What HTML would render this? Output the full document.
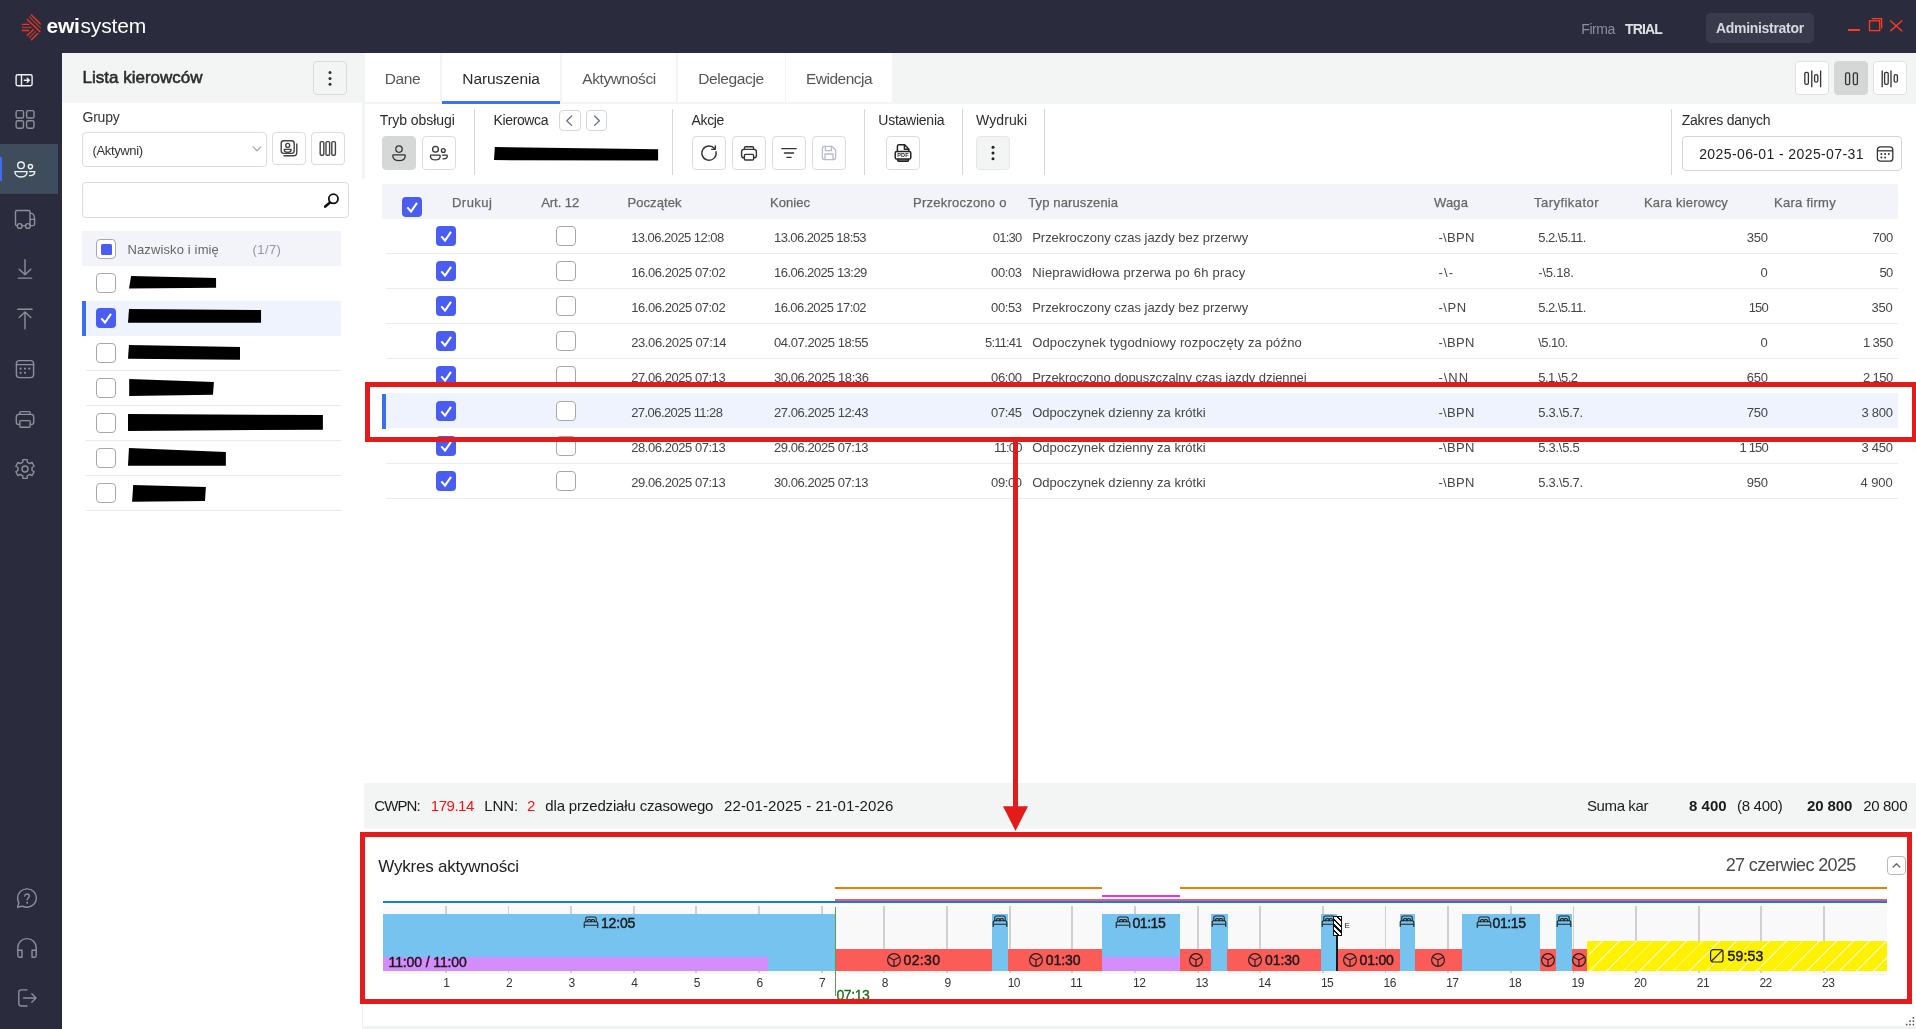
<!DOCTYPE html>
<html lang="pl"><head><meta charset="utf-8"><title>ewisystem - Naruszenia</title>
<style>
html,body{margin:0;padding:0;width:1916px;height:1029px;overflow:hidden;background:#fff;font-family:'Liberation Sans',sans-serif;}
.a{position:absolute;display:block}
.t{white-space:pre;}
</style></head><body>
<div id="app" style="position:absolute;left:0;top:0;width:1916px;height:1029px;will-change:transform">
<div class="a" style="left:0px;top:0px;width:1916px;height:1029px;background:#fff;"></div>
<div class="a" style="left:0px;top:0px;width:1916px;height:53px;background:#2a2c3e;"></div>
<div class="a" style="left:0px;top:53px;width:62px;height:976px;background:#2a2c3e;"></div>
<div class="a" style="left:62px;top:53px;width:303px;height:50px;background:#f3f5f5;"></div>
<div class="a" style="left:365px;top:53px;width:1551px;height:51px;background:#f3f5f5;"></div>
<div class="a" style="left:362px;top:103px;width:3px;height:76px;background:#f3f5f5;"></div>
<div class="a" style="left:0px;top:144px;width:58px;height:50px;background:#3f4c5b;"></div>
<div class="a" style="left:0px;top:157px;width:1.5px;height:24px;background:#3d6cf5;"></div>
<svg class="a" style="left:16px;top:8px;" width="40" height="38" viewBox="0 0 40 38"><g stroke-width="1.35" stroke-linecap="round" fill="none">
<g stroke="#f2361f"><path d="M15.5 7 L24.4 15.9"/><path d="M11.3 11.4 L24 23.8"/><path d="M11.3 27.5 L17.5 21.4"/><path d="M15.5 31.8 L21.8 25.5"/><path d="M6.3 16.4 H12.6"/><path d="M6.3 22.5 H12.6"/></g>
<g stroke="#a6352b"><path d="M13.5 9 L24.4 19.9"/><path d="M13.5 29.5 L19.6 23.6"/><path d="M6.3 19.5 H15.1"/></g></g></svg>
<span class="a t" style="left:46.60px;top:15.42px;font-size:21px;line-height:21px;color:#fff;font-weight:700;letter-spacing:-0.286px;">ewi</span>
<span class="a t" style="left:80.50px;top:15.42px;font-size:21px;line-height:21px;color:#fff;letter-spacing:-0.169px;">system</span>
<span class="a t" style="left:1581.30px;top:22.15px;font-size:14px;line-height:14px;color:#8e8f9a;letter-spacing:-0.456px;">Firma</span>
<span class="a t" style="left:1625.00px;top:22.15px;font-size:14px;line-height:14px;color:#e0e0e4;font-weight:700;letter-spacing:-0.844px;">TRIAL</span>
<div class="a" style="left:1706px;top:13px;width:108px;height:30px;background:#393b4d;border-radius:5px;"></div>
<span class="a t" style="left:1716.00px;top:20.65px;font-size:14px;line-height:14px;color:#d8d9de;font-weight:700;letter-spacing:-0.307px;">Administrator</span>
<div class="a" style="left:1848px;top:28.7px;width:12.2px;height:2.4px;background:#ff3b1e;"></div>
<svg class="a" style="left:1866px;top:16px;" width="20" height="18" viewBox="0 0 20 18"><g fill="none" stroke="#ff3b1e" stroke-width="1.3"><rect x="3.5" y="4.8" width="10.2" height="9.8"/><path d="M5.6 2.7 H15.6 V12.5"/></g></svg>
<svg class="a" style="left:1888px;top:18px;" width="16" height="16" viewBox="0 0 16 16"><g fill="none" stroke="#ff3b1e" stroke-width="1.4"><path d="M2.2 2.4 L14.2 13.2"/><path d="M14.2 2.4 L2.2 13.2"/></g></svg>
<svg class="a" style="left:0px;top:0px;" width="62" height="1029" viewBox="0 0 62 1029">
<g fill="none" stroke-width="1.4" stroke-linecap="round" stroke-linejoin="round">
 <g stroke="#f1f1f3">
  <rect x="16.1" y="74.7" width="16" height="11" rx="1.6"/><path d="M21.5 74.7 V85.7"/><path d="M24.3 80.2 H29.2 M27.2 78.2 L29.3 80.2 L27.2 82.2"/>
  <circle cx="21" cy="165.3" r="3.3"/><path d="M14.9 171.6 H27.1 C27.1 175 24.5 177 21 177 C17.5 177 14.9 175 14.9 171.6 Z"/>
  <circle cx="30.4" cy="166.6" r="2.1"/><path d="M29.6 171.6 H34.8 C34.8 174.2 32.8 175.9 29.6 175.6"/>
 </g>
 <g stroke="#8d8f9b">
  <rect x="16.1" y="110.6" width="7.4" height="7.4" rx="1.6"/><rect x="26.6" y="110.6" width="7.4" height="7.4" rx="1.6"/>
  <rect x="16.1" y="120.8" width="7.4" height="7.4" rx="1.6"/><rect x="26.6" y="120.8" width="7.4" height="7.4" rx="1.6"/>
  <path d="M17.3 225.6 H16.8 C16 225.6 15.5 225 15.5 224.2 V212 C15.5 211 16.2 210.5 17 210.5 H28.4 C29.4 210.5 30 211 30 212 V225.6 M22.2 225.6 H25.4 M30 213.4 H31.6 C33.4 213.4 34.6 216.4 34.6 219 V224.2 C34.6 225.2 34 225.6 33 225.6 H30.4 M30 219.4 H34.4"/>
  <circle cx="19.7" cy="226" r="2.4"/><circle cx="27.9" cy="226" r="2.4"/>
  <path d="M25 259.8 V274.6 M19.2 269.2 L25 274.8 L30.8 269.2 M18.3 278.1 H31.7"/>
  <path d="M17.7 309.2 H32.1 M25 328.8 V312 M19.2 317.6 L25 311.9 L30.8 317.6"/>
  <rect x="16.4" y="360.6" width="17.2" height="17" rx="3"/><path d="M16.4 364.6 H33.6"/>
  <rect x="16.3" y="414.4" width="17.4" height="10.2" rx="2.6"/><path d="M19.8 414.2 V412.8 C19.8 412 20.3 411.6 21 411.6 H29 C29.8 411.6 30.2 412 30.2 412.8 V414.2"/><rect x="19.8" y="420.6" width="10.4" height="6.6" rx="1.2" fill="#2a2c3e"/>
  <path d="M22.81 459.65 L27.19 459.65 L27.22 462.15 L29.82 463.65 L32.00 462.43 L34.19 466.23 L32.04 467.50 L32.04 470.50 L34.19 471.77 L32.00 475.57 L29.82 474.35 L27.22 475.85 L27.19 478.35 L22.81 478.35 L22.78 475.85 L20.18 474.35 L18.00 475.57 L15.81 471.77 L17.96 470.50 L17.96 467.50 L15.81 466.23 L18.00 462.43 L20.18 463.65 L22.78 462.15 Z"/><circle cx="25" cy="469" r="3"/>
  <path d="M27 888.9 C32.2 888.9 36.4 893 36.4 898.1 C36.4 903.2 32.2 907.3 27 907.3 C25.3 907.3 23.7 906.9 22.3 906.1 L17.6 907.3 L18.9 902.8 C18.1 901.4 17.6 899.8 17.6 898.1 C17.6 893 21.8 888.9 27 888.9 Z"/>
  <path d="M24.8 896.1 C24.8 893.3 29.3 893.4 29.3 896.1 C29.3 897.9 27.1 898 27.1 899.9"/>
  <path d="M17.8 950.5 V947.5 C17.8 942.5 21.9 938.6 27 938.6 C32.1 938.6 36.2 942.5 36.2 947.5 V950.5"/>
  <path d="M17.8 950.2 H22 V957.2 H19.4 C18.4 957.2 17.8 956.6 17.8 955.6 Z M36.2 950.2 H32 V957.2 H34.6 C35.6 957.2 36.2 956.6 36.2 955.6 Z"/>
  <path d="M27 989.9 H21.2 C19.6 989.9 18.8 990.8 18.8 992.2 V1003.6 C18.8 1005.2 19.6 1006 21.2 1006 H27 M23.6 998 H35.6 M31.8 993.8 L36 998 L31.8 1002.2"/>
 </g>
 <g fill="#8d8f9b" stroke="none">
  <circle cx="20.6" cy="368.7" r="1.1"/><circle cx="25" cy="368.7" r="1.1"/><circle cx="29.3" cy="368.7" r="1.1"/>
  <circle cx="20.6" cy="372.8" r="1.1"/><circle cx="25" cy="372.8" r="1.1"/>
  <circle cx="27.1" cy="902.8" r="1"/>
 </g>
</g></svg>
<span class="a t" style="left:82.60px;top:68.81px;font-size:17px;line-height:17px;color:#2b2b2b;-webkit-text-stroke:0.55px #2b2b2b;">Lista kierowców</span>
<div class="a" style="left:313px;top:61px;width:34px;height:34px;background:#f3f5f5;border:1px solid #d9dbdb;box-sizing:border-box;border-radius:4px;"></div>
<svg class="a" style="left:313px;top:61px;" width="34" height="34" viewBox="0 0 34 34"><g fill="#333"><circle cx="17" cy="11.6" r="1.5"/><circle cx="17" cy="17.4" r="1.5"/><circle cx="17" cy="23.2" r="1.5"/></g></svg>
<span class="a t" style="left:82.50px;top:110.05px;font-size:14px;line-height:14px;color:#333;letter-spacing:-0.225px;">Grupy</span>
<div class="a" style="left:82px;top:131.5px;width:185px;height:35px;background:#fff;border:1px solid #dcdcdc;box-sizing:border-box;border-radius:4px;"></div>
<span class="a t" style="left:92.60px;top:144.00px;font-size:13px;line-height:13px;color:#333;letter-spacing:-0.384px;">(Aktywni)</span>
<svg class="a" style="left:251px;top:144px;" width="12" height="10" viewBox="0 0 12 10"><path d="M2.3 2.8 L6 6.8 L9.7 2.8" fill="none" stroke="#9ea2b6" stroke-width="1.2" stroke-linecap="round" stroke-linejoin="round"/></svg>
<div class="a" style="left:272.4px;top:132.3px;width:33.4px;height:33.2px;background:#fff;border:1px solid #dcdcdc;box-sizing:border-box;border-radius:4px;"></div>
<svg class="a" style="left:272.4px;top:132.3px;" width="34" height="34" viewBox="0 0 34 34"><g fill="none" stroke="#444" stroke-width="1.4" stroke-linecap="round" stroke-linejoin="round">
<rect x="9.2" y="8.8" width="13" height="12.6" rx="2.6"/><path d="M12 23.8 H21.6 C23.6 23.8 24.8 22.6 24.8 20.6 V12"/>
<circle cx="15.7" cy="13.4" r="2"/><path d="M12.2 17.4 H19.2 C19.2 19.4 18 20.2 15.7 20.2 C13.4 20.2 12.2 19.4 12.2 17.4 Z"/></g></svg>
<div class="a" style="left:311.2px;top:132.3px;width:33.6px;height:33.2px;background:#fff;border:1px solid #dcdcdc;box-sizing:border-box;border-radius:4px;"></div>
<svg class="a" style="left:311.2px;top:132.3px;" width="34" height="34" viewBox="0 0 34 34"><g fill="none" stroke="#444" stroke-width="1.4"><rect x="9.2" y="9.6" width="3.6" height="13.6" rx="1.2"/><rect x="15" y="9.6" width="3.6" height="13.6" rx="1.2"/><rect x="20.8" y="9.6" width="3.6" height="13.6" rx="1.2"/></g></svg>
<div class="a" style="left:82px;top:182.4px;width:267px;height:35.2px;background:#fff;border:1px solid #dcdcdc;box-sizing:border-box;border-radius:4px;"></div>
<svg class="a" style="left:322px;top:191px;" width="20" height="20" viewBox="0 0 20 20"><g fill="none" stroke="#111" stroke-linecap="round"><circle cx="11.4" cy="7.8" r="4.6" stroke-width="1.8"/><path d="M8 11.6 L3.2 15.6" stroke-width="2.6"/></g></svg>
<div class="a" style="left:82px;top:231px;width:259px;height:35px;background:#f3f4f9;"></div>
<div class="a" style="left:96px;top:239px;width:20px;height:19.8px;background:#fff;border:1px solid #a8a8a8;box-sizing:border-box;border-radius:4px;"></div>
<div class="a" style="left:100.6px;top:244px;width:11.4px;height:11px;background:#4a5df2;border-radius:1.5px;"></div>
<span class="a t" style="left:127.40px;top:242.60px;font-size:13px;line-height:13px;color:#666;letter-spacing:0.135px;">Nazwisko i imię</span>
<span class="a t" style="left:252.50px;top:242.60px;font-size:13px;line-height:13px;color:#9296a6;letter-spacing:0.413px;">(1/7)</span>
<div class="a" style="left:82px;top:300.5px;width:259px;height:35px;background:#eef3fd;"></div>
<div class="a" style="left:82px;top:300.5px;width:4px;height:35px;background:#3a6ff0;"></div>
<div class="a" style="left:86px;top:370.0px;width:255px;height:1px;background:#e9e9e9;"></div>
<div class="a" style="left:86px;top:404.9px;width:255px;height:1px;background:#e9e9e9;"></div>
<div class="a" style="left:86px;top:439.9px;width:255px;height:1px;background:#e9e9e9;"></div>
<div class="a" style="left:86px;top:475.0px;width:255px;height:1px;background:#e9e9e9;"></div>
<div class="a" style="left:86px;top:509.9px;width:255px;height:1px;background:#e9e9e9;"></div>
<div class="a" style="left:96px;top:273.3px;width:20px;height:20px;background:#fff;border:1px solid #a8a8a8;box-sizing:border-box;border-radius:4px;"></div>
<svg class="a" style="left:96px;top:308.3px;" width="20" height="20" viewBox="0 0 20 20"><rect x="0" y="0" width="20" height="20" rx="4" fill="#4a5df2"/><path d="M5.3 10.4 L9 14.5 L15 5.8" fill="none" stroke="#fff" stroke-width="2.1" stroke-linecap="butt" stroke-linejoin="miter"/></svg>
<div class="a" style="left:96px;top:343.3px;width:20px;height:20px;background:#fff;border:1px solid #a8a8a8;box-sizing:border-box;border-radius:4px;"></div>
<div class="a" style="left:96px;top:378.3px;width:20px;height:20px;background:#fff;border:1px solid #a8a8a8;box-sizing:border-box;border-radius:4px;"></div>
<div class="a" style="left:96px;top:413.3px;width:20px;height:20px;background:#fff;border:1px solid #a8a8a8;box-sizing:border-box;border-radius:4px;"></div>
<div class="a" style="left:96px;top:448.3px;width:20px;height:20px;background:#fff;border:1px solid #a8a8a8;box-sizing:border-box;border-radius:4px;"></div>
<div class="a" style="left:96px;top:483.3px;width:20px;height:20px;background:#fff;border:1px solid #a8a8a8;box-sizing:border-box;border-radius:4px;"></div>
<svg class="a" style="left:0px;top:0px;" width="700" height="520" viewBox="0 0 700 520"><polygon fill="#000" points="131.1,276 216.05,277.9 216.05,287.7 129,288.6"/><polygon fill="#000" points="129,308.9 261.05,310.1 261.05,322.7 128,322.7"/><polygon fill="#000" points="128.96,345.1 240,346.9 240,359.7 128,358.8"/><polygon fill="#000" points="129.2,379 213.9,382.1 213,394.7 129.2,395.9"/><polygon fill="#000" points="128,414 322.9,415 322.9,429.7 128,430.9"/><polygon fill="#000" points="128.96,448 225.9,451.9 225.9,465.8 128,465.8"/><polygon fill="#000" points="133.2,485.1 205.9,487.1 205,500.9 132.1,501.8"/><polygon fill="#000" points="494.8,147 658.1,149.3 658.1,160.6 494,160.1"/></svg>
<div class="a" style="left:365px;top:53px;width:75.39999999999998px;height:48.5px;background:#fff;"></div>
<div class="a" style="left:441.8px;top:53px;width:118.09999999999997px;height:50px;background:#fff;"></div>
<div class="a" style="left:561.7px;top:53px;width:114.69999999999993px;height:48.5px;background:#fff;"></div>
<div class="a" style="left:677.9px;top:53px;width:106.70000000000005px;height:48.5px;background:#fff;"></div>
<div class="a" style="left:786px;top:53px;width:106px;height:48.5px;background:#fff;"></div>
<div class="a" style="left:441.8px;top:101px;width:118.1px;height:3px;background:#3d73f2;"></div>
<span class="a t" style="left:384.80px;top:70.88px;font-size:15.5px;line-height:15.5px;color:#555;letter-spacing:-0.391px;">Dane</span>
<span class="a t" style="left:462.30px;top:70.88px;font-size:15.5px;line-height:15.5px;color:#2b2b2b;letter-spacing:-0.091px;">Naruszenia</span>
<span class="a t" style="left:582.30px;top:70.88px;font-size:15.5px;line-height:15.5px;color:#555;letter-spacing:-0.403px;">Aktywności</span>
<span class="a t" style="left:698.20px;top:70.88px;font-size:15.5px;line-height:15.5px;color:#555;letter-spacing:-0.382px;">Delegacje</span>
<span class="a t" style="left:806.00px;top:70.88px;font-size:15.5px;line-height:15.5px;color:#555;letter-spacing:-0.517px;">Ewidencja</span>
<div class="a" style="left:1795.4px;top:61.3px;width:33.2px;height:33.4px;background:#fff;border:1px solid #dfe1e1;box-sizing:border-box;border-radius:4px;"></div>
<div class="a" style="left:1834.4px;top:61.3px;width:33.4px;height:33.4px;background:#d5d7d7;border:1px solid #d5d7d7;box-sizing:border-box;border-radius:4px;"></div>
<div class="a" style="left:1873.4px;top:61.3px;width:33.4px;height:33.4px;background:#fff;border:1px solid #dfe1e1;box-sizing:border-box;border-radius:4px;"></div>
<svg class="a" style="left:1796.2px;top:61.6px;" width="34" height="34" viewBox="0 0 34 34"><g fill="none" stroke="#333" stroke-width="1.3"><rect x="8.8" y="10.4" width="3.6" height="12" rx="1.4"/><path d="M15.8 8.4 V25.2 M24.6 8.4 V25.2"/><rect x="18.6" y="12.6" width="3.2" height="7.6" rx="1.5"/></g></svg>
<svg class="a" style="left:1834.9px;top:61.6px;" width="34" height="34" viewBox="0 0 34 34"><g fill="none" stroke="#333" stroke-width="1.3"><rect x="10.6" y="10.8" width="4" height="11.8" rx="1.4"/><rect x="18.4" y="10.8" width="4" height="11.8" rx="1.4"/></g></svg>
<svg class="a" style="left:1873.9px;top:61.6px;" width="34" height="34" viewBox="0 0 34 34"><g fill="none" stroke="#333" stroke-width="1.3"><path d="M8.2 8.4 V25.2 M17 8.4 V25.2"/><rect x="10.6" y="10.4" width="3.6" height="12" rx="1.4"/><rect x="20.2" y="12.6" width="3.2" height="7.6" rx="1.5"/></g></svg>
<span class="a t" style="left:379.70px;top:113.15px;font-size:14px;line-height:14px;color:#2b2b2b;letter-spacing:-0.062px;">Tryb obsługi</span>
<div class="a" style="left:382px;top:136px;width:34px;height:33.6px;background:#d6d8d8;border:1px solid #d6d8d8;box-sizing:border-box;border-radius:4px;"></div>
<div class="a" style="left:422.2px;top:136px;width:33.8px;height:33.6px;background:#fff;border:1px solid #dcdcdc;box-sizing:border-box;border-radius:4px;"></div>
<svg class="a" style="left:382px;top:136px;" width="34" height="34" viewBox="0 0 34 34"><g fill="none" stroke="#333" stroke-width="1.3" stroke-linejoin="round"><circle cx="17" cy="13.1" r="3.2"/><path d="M10.8 19.7 Q10.8 18.9 11.6 18.9 H22.4 Q23.2 18.9 23.2 19.7 C23.2 23 20.6 24.7 17 24.7 C13.4 24.7 10.8 23 10.8 19.7 Z"/></g></svg>
<svg class="a" style="left:422.2px;top:136px;" width="34" height="34" viewBox="0 0 34 34"><g fill="none" stroke="#333" stroke-width="1.3" stroke-linejoin="round" stroke-linecap="round"><circle cx="13.5" cy="13.2" r="2.9"/><path d="M8.4 19.9 Q8.4 19.2 9.1 19.2 H17.5 Q18.2 19.2 18.2 19.9 C18.2 22.6 16.3 23.9 13.3 23.9 C10.3 23.9 8.4 22.6 8.4 19.9 Z"/><circle cx="21.3" cy="14.5" r="1.9"/><path d="M20.6 19.2 H24.6 Q25.3 19.2 25.3 19.9 C25.3 22 23.6 23.1 21 22.8"/></g></svg>
<div class="a" style="left:473.9px;top:108.5px;width:1.2px;height:66px;background:#d6d6d6;"></div>
<div class="a" style="left:671.9px;top:108.5px;width:1.2px;height:66px;background:#d6d6d6;"></div>
<div class="a" style="left:864.0px;top:108.5px;width:1.2px;height:66px;background:#d6d6d6;"></div>
<div class="a" style="left:961.9px;top:108.5px;width:1.2px;height:66px;background:#d6d6d6;"></div>
<div class="a" style="left:1044.1px;top:108.5px;width:1.2px;height:66px;background:#d6d6d6;"></div>
<div class="a" style="left:1670.8px;top:108.5px;width:1.2px;height:66px;background:#d6d6d6;"></div>
<span class="a t" style="left:493.50px;top:113.15px;font-size:14px;line-height:14px;color:#2b2b2b;letter-spacing:-0.362px;">Kierowca</span>
<div class="a" style="left:559.2px;top:110.2px;width:21.4px;height:21.2px;background:#fff;border:1px solid #d4d6de;box-sizing:border-box;border-radius:4px;"></div>
<div class="a" style="left:586.1px;top:110.2px;width:21.4px;height:21.2px;background:#fff;border:1px solid #d4d6de;box-sizing:border-box;border-radius:4px;"></div>
<svg class="a" style="left:559.2px;top:110.2px;" width="22" height="22" viewBox="0 0 22 22"><path d="M12.6 6 L7.8 10.7 L12.6 15.4" fill="none" stroke="#6a6f8a" stroke-width="1.3" stroke-linecap="round" stroke-linejoin="round"/></svg>
<svg class="a" style="left:586.1px;top:110.2px;" width="22" height="22" viewBox="0 0 22 22"><path d="M8.6 6 L13.4 10.7 L8.6 15.4" fill="none" stroke="#6a6f8a" stroke-width="1.3" stroke-linecap="round" stroke-linejoin="round"/></svg>
<span class="a t" style="left:691.50px;top:113.15px;font-size:14px;line-height:14px;color:#2b2b2b;letter-spacing:-0.347px;">Akcje</span>
<div class="a" style="left:692px;top:136px;width:34px;height:34px;background:#fff;border:1px solid #dcdcdc;box-sizing:border-box;border-radius:4px;"></div>
<div class="a" style="left:732px;top:136px;width:34px;height:34px;background:#fff;border:1px solid #dcdcdc;box-sizing:border-box;border-radius:4px;"></div>
<div class="a" style="left:772px;top:136px;width:34px;height:34px;background:#fff;border:1px solid #dcdcdc;box-sizing:border-box;border-radius:4px;"></div>
<div class="a" style="left:812px;top:136px;width:34px;height:34px;background:#fff;border:1px solid #dcdcdc;box-sizing:border-box;border-radius:4px;"></div>
<svg class="a" style="left:692px;top:136px;" width="34" height="34" viewBox="0 0 34 34"><g fill="none" stroke="#333" stroke-width="1.4" stroke-linecap="round" stroke-linejoin="round"><path d="M24.05 15.8 A7.15 7.15 0 1 1 22.5 12.5"/><path d="M23.35 9.9 V13.35 H19.7"/></g></svg>
<svg class="a" style="left:732px;top:136px;" width="34" height="34" viewBox="0 0 34 34"><g fill="none" stroke="#333" stroke-width="1.4" stroke-linejoin="round"><rect x="9.6" y="13.4" width="14.8" height="8.4" rx="2.4"/><path d="M12.4 13.2 V12 C12.4 11.2 12.9 10.8 13.6 10.8 H20.4 C21.2 10.8 21.6 11.2 21.6 12 V13.2"/><rect x="12.4" y="18.4" width="9.2" height="5.6" rx="1" fill="#fff"/></g></svg>
<svg class="a" style="left:772px;top:136px;" width="34" height="34" viewBox="0 0 34 34"><g fill="none" stroke="#333" stroke-width="1.4" stroke-linecap="round"><path d="M9.8 12.6 H24.2 M12.4 17 H21.6 M15 21.4 H19"/></g></svg>
<svg class="a" style="left:812px;top:136px;" width="34" height="34" viewBox="0 0 34 34"><g fill="none" stroke="#b9bcc6" stroke-width="1.3" stroke-linejoin="round"><path d="M10.4 12.4 C10.4 11.2 11.2 10.4 12.4 10.4 H20 L23.6 14 V21.6 C23.6 22.8 22.8 23.6 21.6 23.6 H12.4 C11.2 23.6 10.4 22.8 10.4 21.6 Z"/><path d="M13.4 10.6 V14.6 H19.4 V10.6 M13 23.4 V18 H21 V23.4"/></g></svg>
<span class="a t" style="left:878.30px;top:113.15px;font-size:14px;line-height:14px;color:#2b2b2b;letter-spacing:-0.248px;">Ustawienia</span>
<div class="a" style="left:886.2px;top:136px;width:34px;height:34px;background:#fff;border:1px solid #dcdcdc;box-sizing:border-box;border-radius:4px;"></div>
<svg class="a" style="left:886.2px;top:136px;" width="34" height="34" viewBox="0 0 34 34"><g fill="none" stroke="#222" stroke-width="1.5" stroke-linejoin="round"><path d="M11.4 15.6 V10.4 C11.4 9.4 12 8.8 13 8.8 H18.6 L22.8 13 V15.6"/><path d="M18.4 9 V13.2 H22.6"/><path d="M11.6 23 V24 C11.6 24.8 12.1 25.2 12.8 25.2 H21.4 C22.2 25.2 22.6 24.8 22.6 24 V23" fill="#8a8a8a"/>
<rect x="9.2" y="15.6" width="15.6" height="7.4" rx="1.6" fill="#fff"/></g>
<text x="17" y="21.25" font-family="'Liberation Sans',sans-serif" font-size="5.5" font-weight="700" fill="#222" text-anchor="middle" letter-spacing="0.2">PDF</text></svg>
<span class="a t" style="left:976.10px;top:113.15px;font-size:14px;line-height:14px;color:#2b2b2b;letter-spacing:0.080px;">Wydruki</span>
<div class="a" style="left:976px;top:136px;width:34px;height:34px;background:#f3f4f4;border:1px solid #e6e6e6;box-sizing:border-box;border-radius:4px;"></div>
<svg class="a" style="left:976px;top:136px;" width="34" height="34" viewBox="0 0 34 34"><g fill="#222"><circle cx="17" cy="11.2" r="1.5"/><circle cx="17" cy="17" r="1.5"/><circle cx="17" cy="22.8" r="1.5"/></g></svg>
<span class="a t" style="left:1681.80px;top:113.15px;font-size:14px;line-height:14px;color:#2b2b2b;letter-spacing:-0.256px;">Zakres danych</span>
<div class="a" style="left:1682.3px;top:136.3px;width:219.4px;height:34.3px;background:#fff;border:1px solid #d4d4d4;box-sizing:border-box;border-radius:4px;"></div>
<span class="a t" style="left:1699.20px;top:147.15px;font-size:14px;line-height:14px;color:#222;letter-spacing:0.393px;">2025-06-01 - 2025-07-31</span>
<svg class="a" style="left:1875px;top:144px;" width="20" height="20" viewBox="0 0 20 20"><g fill="none" stroke="#333" stroke-width="1.3"><rect x="2.4" y="2.8" width="15.4" height="14.4" rx="3"/><path d="M2.4 6.8 H17.8"/></g>
<g fill="#333"><circle cx="6.4" cy="10" r="1"/><circle cx="10.1" cy="10" r="1"/><circle cx="13.8" cy="10" r="1"/><circle cx="6.4" cy="13.6" r="1"/><circle cx="10.1" cy="13.6" r="1"/></g></svg>
<div class="a" style="left:382px;top:184.2px;width:1515.8px;height:34.5px;background:#f3f4f9;"></div>
<svg class="a" style="left:402px;top:197px;" width="20" height="20" viewBox="0 0 20 20"><rect x="0" y="0" width="20" height="20" rx="4" fill="#4a5df2"/><path d="M5.3 10.4 L9 14.5 L15 5.8" fill="none" stroke="#fff" stroke-width="2.1" stroke-linecap="butt" stroke-linejoin="miter"/></svg>
<span class="a t" style="left:452.00px;top:195.50px;font-size:13px;line-height:13px;color:#666;letter-spacing:0.454px;-webkit-text-stroke:0.25px #666;">Drukuj</span>
<span class="a t" style="left:541.20px;top:195.50px;font-size:13px;line-height:13px;color:#666;letter-spacing:-0.042px;-webkit-text-stroke:0.25px #666;">Art. 12</span>
<span class="a t" style="left:627.50px;top:195.50px;font-size:13px;line-height:13px;color:#666;letter-spacing:0.064px;-webkit-text-stroke:0.25px #666;">Początek</span>
<span class="a t" style="left:770.00px;top:195.50px;font-size:13px;line-height:13px;color:#666;letter-spacing:0.042px;-webkit-text-stroke:0.25px #666;">Koniec</span>
<span class="a t" style="left:913.00px;top:195.50px;font-size:13px;line-height:13px;color:#666;letter-spacing:0.234px;-webkit-text-stroke:0.25px #666;">Przekroczono o</span>
<span class="a t" style="left:1028.20px;top:195.50px;font-size:13px;line-height:13px;color:#666;letter-spacing:0.131px;-webkit-text-stroke:0.25px #666;">Typ naruszenia</span>
<span class="a t" style="left:1434.10px;top:195.50px;font-size:13px;line-height:13px;color:#666;letter-spacing:0.129px;-webkit-text-stroke:0.25px #666;">Waga</span>
<span class="a t" style="left:1534.00px;top:195.50px;font-size:13px;line-height:13px;color:#666;letter-spacing:0.457px;-webkit-text-stroke:0.25px #666;">Taryfikator</span>
<span class="a t" style="left:1644.00px;top:195.50px;font-size:13px;line-height:13px;color:#666;letter-spacing:0.181px;-webkit-text-stroke:0.25px #666;">Kara kierowcy</span>
<span class="a t" style="left:1774.00px;top:195.50px;font-size:13px;line-height:13px;color:#666;letter-spacing:0.277px;-webkit-text-stroke:0.25px #666;">Kara firmy</span>
<div class="a" style="left:386px;top:253.0px;width:1511.8px;height:1px;background:#ececec;"></div>
<svg class="a" style="left:436px;top:226.0px;" width="20" height="20" viewBox="0 0 20 20"><rect x="0" y="0" width="20" height="20" rx="4" fill="#4a5df2"/><path d="M5.3 10.4 L9 14.5 L15 5.8" fill="none" stroke="#fff" stroke-width="2.1" stroke-linecap="butt" stroke-linejoin="miter"/></svg>
<div class="a" style="left:555.8px;top:226.0px;width:20px;height:20px;background:#fff;border:1px solid #a8a8a8;box-sizing:border-box;border-radius:4px;"></div>
<span class="a t" style="left:631.20px;top:230.60px;font-size:13px;line-height:13px;color:#454545;letter-spacing:-0.551px;">13.06.2025 12:08</span>
<span class="a t" style="left:774.00px;top:230.60px;font-size:13px;line-height:13px;color:#454545;letter-spacing:-0.576px;">13.06.2025 18:53</span>
<span class="a t" style="left:992.80px;top:230.60px;font-size:13px;line-height:13px;color:#454545;letter-spacing:-0.749px;">01:30</span>
<span class="a t" style="left:1032.20px;top:230.60px;font-size:13px;line-height:13px;color:#454545;letter-spacing:-0.021px;">Przekroczony czas jazdy bez przerwy</span>
<span class="a t" style="left:1438.40px;top:230.60px;font-size:13px;line-height:13px;color:#454545;letter-spacing:0.326px;">-\BPN</span>
<span class="a t" style="left:1538.30px;top:230.60px;font-size:13px;line-height:13px;color:#454545;letter-spacing:-0.585px;">5.2.\5.11.</span>
<span class="a t" style="left:1746.80px;top:230.60px;font-size:13px;line-height:13px;color:#454545;letter-spacing:-0.234px;">350</span>
<span class="a t" style="left:1872.60px;top:230.60px;font-size:13px;line-height:13px;color:#454545;letter-spacing:-0.568px;">700</span>
<div class="a" style="left:386px;top:288.0px;width:1511.8px;height:1px;background:#ececec;"></div>
<svg class="a" style="left:436px;top:261.0px;" width="20" height="20" viewBox="0 0 20 20"><rect x="0" y="0" width="20" height="20" rx="4" fill="#4a5df2"/><path d="M5.3 10.4 L9 14.5 L15 5.8" fill="none" stroke="#fff" stroke-width="2.1" stroke-linecap="butt" stroke-linejoin="miter"/></svg>
<div class="a" style="left:555.8px;top:261.0px;width:20px;height:20px;background:#fff;border:1px solid #a8a8a8;box-sizing:border-box;border-radius:4px;"></div>
<span class="a t" style="left:631.20px;top:265.60px;font-size:13px;line-height:13px;color:#454545;letter-spacing:-0.451px;">16.06.2025 07:02</span>
<span class="a t" style="left:774.00px;top:265.60px;font-size:13px;line-height:13px;color:#454545;letter-spacing:-0.526px;">16.06.2025 13:29</span>
<span class="a t" style="left:991.10px;top:265.60px;font-size:13px;line-height:13px;color:#454545;letter-spacing:-0.409px;">00:03</span>
<span class="a t" style="left:1032.20px;top:265.60px;font-size:13px;line-height:13px;color:#454545;letter-spacing:0.220px;">Nieprawidłowa przerwa po 6h pracy</span>
<span class="a t" style="left:1438.40px;top:265.60px;font-size:13px;line-height:13px;color:#454545;letter-spacing:1.173px;">-\-</span>
<span class="a t" style="left:1538.30px;top:265.60px;font-size:13px;line-height:13px;color:#454545;letter-spacing:-0.208px;">-\5.18.</span>
<span class="a t" style="left:1760.57px;top:265.60px;font-size:13px;line-height:13px;color:#454545;">0</span>
<span class="a t" style="left:1879.60px;top:265.60px;font-size:13px;line-height:13px;color:#454545;letter-spacing:-0.734px;">50</span>
<div class="a" style="left:386px;top:323.0px;width:1511.8px;height:1px;background:#ececec;"></div>
<svg class="a" style="left:436px;top:296.0px;" width="20" height="20" viewBox="0 0 20 20"><rect x="0" y="0" width="20" height="20" rx="4" fill="#4a5df2"/><path d="M5.3 10.4 L9 14.5 L15 5.8" fill="none" stroke="#fff" stroke-width="2.1" stroke-linecap="butt" stroke-linejoin="miter"/></svg>
<div class="a" style="left:555.8px;top:296.0px;width:20px;height:20px;background:#fff;border:1px solid #a8a8a8;box-sizing:border-box;border-radius:4px;"></div>
<span class="a t" style="left:631.20px;top:300.60px;font-size:13px;line-height:13px;color:#454545;letter-spacing:-0.451px;">16.06.2025 07:02</span>
<span class="a t" style="left:774.00px;top:300.60px;font-size:13px;line-height:13px;color:#454545;letter-spacing:-0.576px;">16.06.2025 17:02</span>
<span class="a t" style="left:991.10px;top:300.60px;font-size:13px;line-height:13px;color:#454545;letter-spacing:-0.409px;">00:53</span>
<span class="a t" style="left:1032.20px;top:300.60px;font-size:13px;line-height:13px;color:#454545;letter-spacing:-0.021px;">Przekroczony czas jazdy bez przerwy</span>
<span class="a t" style="left:1438.40px;top:300.60px;font-size:13px;line-height:13px;color:#454545;letter-spacing:0.550px;">-\PN</span>
<span class="a t" style="left:1538.30px;top:300.60px;font-size:13px;line-height:13px;color:#454545;letter-spacing:-0.585px;">5.2.\5.11.</span>
<span class="a t" style="left:1748.70px;top:300.60px;font-size:13px;line-height:13px;color:#454545;letter-spacing:-0.868px;">150</span>
<span class="a t" style="left:1871.60px;top:300.60px;font-size:13px;line-height:13px;color:#454545;letter-spacing:-0.234px;">350</span>
<div class="a" style="left:386px;top:358.0px;width:1511.8px;height:1px;background:#ececec;"></div>
<svg class="a" style="left:436px;top:331.0px;" width="20" height="20" viewBox="0 0 20 20"><rect x="0" y="0" width="20" height="20" rx="4" fill="#4a5df2"/><path d="M5.3 10.4 L9 14.5 L15 5.8" fill="none" stroke="#fff" stroke-width="2.1" stroke-linecap="butt" stroke-linejoin="miter"/></svg>
<div class="a" style="left:555.8px;top:331.0px;width:20px;height:20px;background:#fff;border:1px solid #a8a8a8;box-sizing:border-box;border-radius:4px;"></div>
<span class="a t" style="left:631.20px;top:335.60px;font-size:13px;line-height:13px;color:#454545;letter-spacing:-0.395px;">23.06.2025 07:14</span>
<span class="a t" style="left:774.00px;top:335.60px;font-size:13px;line-height:13px;color:#454545;letter-spacing:-0.451px;">04.07.2025 18:55</span>
<span class="a t" style="left:985.10px;top:335.60px;font-size:13px;line-height:13px;color:#454545;letter-spacing:-0.846px;">5:11:41</span>
<span class="a t" style="left:1032.20px;top:335.60px;font-size:13px;line-height:13px;color:#454545;letter-spacing:0.145px;">Odpoczynek tygodniowy rozpoczęty za późno</span>
<span class="a t" style="left:1438.40px;top:335.60px;font-size:13px;line-height:13px;color:#454545;letter-spacing:0.326px;">-\BPN</span>
<span class="a t" style="left:1538.30px;top:335.60px;font-size:13px;line-height:13px;color:#454545;letter-spacing:-0.555px;">\5.10.</span>
<span class="a t" style="left:1760.57px;top:335.60px;font-size:13px;line-height:13px;color:#454545;">0</span>
<span class="a t" style="left:1862.90px;top:335.60px;font-size:13px;line-height:13px;color:#454545;letter-spacing:-0.569px;">1 350</span>
<div class="a" style="left:386px;top:393.0px;width:1511.8px;height:1px;background:#ececec;"></div>
<svg class="a" style="left:436px;top:366.0px;" width="20" height="20" viewBox="0 0 20 20"><rect x="0" y="0" width="20" height="20" rx="4" fill="#4a5df2"/><path d="M5.3 10.4 L9 14.5 L15 5.8" fill="none" stroke="#fff" stroke-width="2.1" stroke-linecap="butt" stroke-linejoin="miter"/></svg>
<div class="a" style="left:555.8px;top:366.0px;width:20px;height:20px;background:#fff;border:1px solid #a8a8a8;box-sizing:border-box;border-radius:4px;"></div>
<span class="a t" style="left:631.20px;top:370.60px;font-size:13px;line-height:13px;color:#454545;letter-spacing:-0.451px;">27.06.2025 07:13</span>
<span class="a t" style="left:774.00px;top:370.60px;font-size:13px;line-height:13px;color:#454545;letter-spacing:-0.420px;">30.06.2025 18:36</span>
<span class="a t" style="left:991.10px;top:370.60px;font-size:13px;line-height:13px;color:#454545;letter-spacing:-0.409px;">06:00</span>
<span class="a t" style="left:1032.20px;top:370.60px;font-size:13px;line-height:13px;color:#454545;letter-spacing:-0.085px;">Przekroczono dopuszczalny czas jazdy dziennej</span>
<span class="a t" style="left:1438.40px;top:370.60px;font-size:13px;line-height:13px;color:#454545;letter-spacing:0.970px;">-\NN</span>
<span class="a t" style="left:1538.30px;top:370.60px;font-size:13px;line-height:13px;color:#454545;letter-spacing:-0.522px;">5.1.\5.2</span>
<span class="a t" style="left:1746.80px;top:370.60px;font-size:13px;line-height:13px;color:#454545;letter-spacing:-0.234px;">650</span>
<span class="a t" style="left:1862.90px;top:370.60px;font-size:13px;line-height:13px;color:#454545;letter-spacing:-0.569px;">2 150</span>
<div class="a" style="left:386px;top:393.09999999999997px;width:1512px;height:35.4px;background:#eef3fd;"></div>
<div class="a" style="left:382px;top:394.09999999999997px;width:4.1px;height:34.6px;background:#3a6ff0;"></div>
<svg class="a" style="left:436px;top:401.0px;" width="20" height="20" viewBox="0 0 20 20"><rect x="0" y="0" width="20" height="20" rx="4" fill="#4a5df2"/><path d="M5.3 10.4 L9 14.5 L15 5.8" fill="none" stroke="#fff" stroke-width="2.1" stroke-linecap="butt" stroke-linejoin="miter"/></svg>
<div class="a" style="left:555.8px;top:401.0px;width:20px;height:20px;background:#fff;border:1px solid #a8a8a8;box-sizing:border-box;border-radius:4px;"></div>
<span class="a t" style="left:631.20px;top:405.60px;font-size:13px;line-height:13px;color:#454545;letter-spacing:-0.566px;">27.06.2025 11:28</span>
<span class="a t" style="left:774.00px;top:405.60px;font-size:13px;line-height:13px;color:#454545;letter-spacing:-0.451px;">27.06.2025 12:43</span>
<span class="a t" style="left:991.10px;top:405.60px;font-size:13px;line-height:13px;color:#454545;letter-spacing:-0.409px;">07:45</span>
<span class="a t" style="left:1032.20px;top:405.60px;font-size:13px;line-height:13px;color:#454545;letter-spacing:0.028px;">Odpoczynek dzienny za krótki</span>
<span class="a t" style="left:1438.40px;top:405.60px;font-size:13px;line-height:13px;color:#454545;letter-spacing:0.326px;">-\BPN</span>
<span class="a t" style="left:1538.30px;top:405.60px;font-size:13px;line-height:13px;color:#454545;letter-spacing:-0.276px;">5.3.\5.7.</span>
<span class="a t" style="left:1746.80px;top:405.60px;font-size:13px;line-height:13px;color:#454545;letter-spacing:-0.234px;">750</span>
<span class="a t" style="left:1861.60px;top:405.60px;font-size:13px;line-height:13px;color:#454545;letter-spacing:-0.309px;">3 800</span>
<div class="a" style="left:386px;top:463.0px;width:1511.8px;height:1px;background:#ececec;"></div>
<svg class="a" style="left:436px;top:436.0px;" width="20" height="20" viewBox="0 0 20 20"><rect x="0" y="0" width="20" height="20" rx="4" fill="#4a5df2"/><path d="M5.3 10.4 L9 14.5 L15 5.8" fill="none" stroke="#fff" stroke-width="2.1" stroke-linecap="butt" stroke-linejoin="miter"/></svg>
<div class="a" style="left:555.8px;top:436.0px;width:20px;height:20px;background:#fff;border:1px solid #a8a8a8;box-sizing:border-box;border-radius:4px;"></div>
<span class="a t" style="left:631.20px;top:440.60px;font-size:13px;line-height:13px;color:#454545;letter-spacing:-0.451px;">28.06.2025 07:13</span>
<span class="a t" style="left:774.00px;top:440.60px;font-size:13px;line-height:13px;color:#454545;letter-spacing:-0.451px;">29.06.2025 07:13</span>
<span class="a t" style="left:994.10px;top:440.60px;font-size:13px;line-height:13px;color:#454545;letter-spacing:-0.816px;">11:00</span>
<span class="a t" style="left:1032.20px;top:440.60px;font-size:13px;line-height:13px;color:#454545;letter-spacing:0.028px;">Odpoczynek dzienny za krótki</span>
<span class="a t" style="left:1438.40px;top:440.60px;font-size:13px;line-height:13px;color:#454545;letter-spacing:0.326px;">-\BPN</span>
<span class="a t" style="left:1538.30px;top:440.60px;font-size:13px;line-height:13px;color:#454545;letter-spacing:-0.284px;">5.3.\5.5</span>
<span class="a t" style="left:1739.60px;top:440.60px;font-size:13px;line-height:13px;color:#454545;letter-spacing:-0.869px;">1 150</span>
<span class="a t" style="left:1861.60px;top:440.60px;font-size:13px;line-height:13px;color:#454545;letter-spacing:-0.309px;">3 450</span>
<div class="a" style="left:386px;top:498.0px;width:1511.8px;height:1px;background:#ececec;"></div>
<svg class="a" style="left:436px;top:471.0px;" width="20" height="20" viewBox="0 0 20 20"><rect x="0" y="0" width="20" height="20" rx="4" fill="#4a5df2"/><path d="M5.3 10.4 L9 14.5 L15 5.8" fill="none" stroke="#fff" stroke-width="2.1" stroke-linecap="butt" stroke-linejoin="miter"/></svg>
<div class="a" style="left:555.8px;top:471.0px;width:20px;height:20px;background:#fff;border:1px solid #a8a8a8;box-sizing:border-box;border-radius:4px;"></div>
<span class="a t" style="left:631.20px;top:475.60px;font-size:13px;line-height:13px;color:#454545;letter-spacing:-0.451px;">29.06.2025 07:13</span>
<span class="a t" style="left:774.00px;top:475.60px;font-size:13px;line-height:13px;color:#454545;letter-spacing:-0.451px;">30.06.2025 07:13</span>
<span class="a t" style="left:991.10px;top:475.60px;font-size:13px;line-height:13px;color:#454545;letter-spacing:-0.409px;">09:00</span>
<span class="a t" style="left:1032.20px;top:475.60px;font-size:13px;line-height:13px;color:#454545;letter-spacing:0.028px;">Odpoczynek dzienny za krótki</span>
<span class="a t" style="left:1438.40px;top:475.60px;font-size:13px;line-height:13px;color:#454545;letter-spacing:0.326px;">-\BPN</span>
<span class="a t" style="left:1538.30px;top:475.60px;font-size:13px;line-height:13px;color:#454545;letter-spacing:-0.276px;">5.3.\5.7.</span>
<span class="a t" style="left:1746.80px;top:475.60px;font-size:13px;line-height:13px;color:#454545;letter-spacing:-0.234px;">950</span>
<span class="a t" style="left:1860.60px;top:475.60px;font-size:13px;line-height:13px;color:#454545;letter-spacing:-0.109px;">4 900</span>
<div class="a" style="left:364.2px;top:783px;width:1552px;height:45px;background:#f3f5f5;"></div>
<div class="a" style="left:364.2px;top:828px;width:1552px;height:1px;background:#f9fafa;"></div>
<span class="a t" style="left:374.20px;top:797.90px;font-size:15px;line-height:15px;color:#1a1a1a;letter-spacing:-0.880px;">CWPN:</span>
<span class="a t" style="left:430.80px;top:797.90px;font-size:15px;line-height:15px;color:#f51212;letter-spacing:-0.482px;">179.14</span>
<span class="a t" style="left:484.20px;top:797.90px;font-size:15px;line-height:15px;color:#1a1a1a;letter-spacing:-0.047px;">LNN:</span>
<span class="a t" style="left:527.00px;top:797.90px;font-size:15px;line-height:15px;color:#f51212;">2</span>
<span class="a t" style="left:545.30px;top:797.90px;font-size:15px;line-height:15px;color:#1a1a1a;letter-spacing:-0.158px;">dla przedziału czasowego</span>
<span class="a t" style="left:724.00px;top:797.90px;font-size:15px;line-height:15px;color:#1a1a1a;letter-spacing:0.113px;">22-01-2025 - 21-01-2026</span>
<span class="a t" style="left:1587.00px;top:797.90px;font-size:15px;line-height:15px;color:#1a1a1a;letter-spacing:-0.400px;">Suma kar</span>
<span class="a t" style="left:1689.00px;top:797.90px;font-size:15px;line-height:15px;color:#1a1a1a;font-weight:700;letter-spacing:0.011px;">8 400</span>
<span class="a t" style="left:1737.00px;top:797.90px;font-size:15px;line-height:15px;color:#1a1a1a;letter-spacing:-0.304px;">(8 400)</span>
<span class="a t" style="left:1806.90px;top:797.90px;font-size:15px;line-height:15px;color:#1a1a1a;font-weight:700;letter-spacing:-0.082px;">20 800</span>
<span class="a t" style="left:1863.20px;top:797.90px;font-size:15px;line-height:15px;color:#1a1a1a;letter-spacing:-0.315px;">20 800</span>
<div class="a" style="left:365px;top:829px;width:1551px;height:196px;background:#fff;"></div>
<div class="a" style="left:362.2px;top:1026px;width:1554px;height:3px;background:#f1f3f3;"></div>
<div class="a" style="left:362.2px;top:1004px;width:1px;height:22px;background:#eef0f0;"></div>
<span class="a t" style="left:378.30px;top:857.61px;font-size:17px;line-height:17px;color:#222;letter-spacing:-0.229px;">Wykres aktywności</span>
<span class="a t" style="left:1725.70px;top:856.16px;font-size:18px;line-height:18px;color:#4a4a4a;letter-spacing:-0.631px;">27 czerwiec 2025</span>
<div class="a" style="left:1887px;top:856.4px;width:18.8px;height:18.4px;background:#fff;border:1px solid #b8b8b8;box-sizing:border-box;border-radius:4px;"></div>
<svg class="a" style="left:1887px;top:856.4px;" width="19" height="19" viewBox="0 0 19 19"><path d="M6.2 11 L9.5 7.8 L12.8 11" fill="none" stroke="#666" stroke-width="1.3" stroke-linecap="round" stroke-linejoin="round"/></svg>
<div class="a" style="left:383.2px;top:906.2px;width:1503.5px;height:69.2px;background:#f9f9f9;"></div>
<div class="a" style="left:444.8958333333333px;top:906.2px;width:1.9px;height:66.2px;background:#d0d0d0;"></div>
<div class="a" style="left:507.5416666666667px;top:906.2px;width:1.9px;height:66.2px;background:#d0d0d0;"></div>
<div class="a" style="left:570.1875px;top:906.2px;width:1.9px;height:66.2px;background:#d0d0d0;"></div>
<div class="a" style="left:632.8333333333333px;top:906.2px;width:1.9px;height:66.2px;background:#d0d0d0;"></div>
<div class="a" style="left:695.4791666666666px;top:906.2px;width:1.9px;height:66.2px;background:#d0d0d0;"></div>
<div class="a" style="left:758.125px;top:906.2px;width:1.9px;height:66.2px;background:#d0d0d0;"></div>
<div class="a" style="left:820.7708333333333px;top:906.2px;width:1.9px;height:66.2px;background:#d0d0d0;"></div>
<div class="a" style="left:883.4166666666666px;top:906.2px;width:1.9px;height:66.2px;background:#d0d0d0;"></div>
<div class="a" style="left:946.0625px;top:906.2px;width:1.9px;height:66.2px;background:#d0d0d0;"></div>
<div class="a" style="left:1008.7083333333333px;top:906.2px;width:1.9px;height:66.2px;background:#d0d0d0;"></div>
<div class="a" style="left:1071.3541666666667px;top:906.2px;width:1.9px;height:66.2px;background:#d0d0d0;"></div>
<div class="a" style="left:1134.0px;top:906.2px;width:1.9px;height:66.2px;background:#d0d0d0;"></div>
<div class="a" style="left:1196.6458333333333px;top:906.2px;width:1.9px;height:66.2px;background:#d0d0d0;"></div>
<div class="a" style="left:1259.2916666666667px;top:906.2px;width:1.9px;height:66.2px;background:#d0d0d0;"></div>
<div class="a" style="left:1321.9375px;top:906.2px;width:1.9px;height:66.2px;background:#d0d0d0;"></div>
<div class="a" style="left:1384.5833333333333px;top:906.2px;width:1.9px;height:66.2px;background:#d0d0d0;"></div>
<div class="a" style="left:1447.2291666666667px;top:906.2px;width:1.9px;height:66.2px;background:#d0d0d0;"></div>
<div class="a" style="left:1509.875px;top:906.2px;width:1.9px;height:66.2px;background:#d0d0d0;"></div>
<div class="a" style="left:1572.5208333333335px;top:906.2px;width:1.9px;height:66.2px;background:#d0d0d0;"></div>
<div class="a" style="left:1635.1666666666667px;top:906.2px;width:1.9px;height:66.2px;background:#d0d0d0;"></div>
<div class="a" style="left:1697.8125px;top:906.2px;width:1.9px;height:66.2px;background:#d0d0d0;"></div>
<div class="a" style="left:1760.4583333333335px;top:906.2px;width:1.9px;height:66.2px;background:#d0d0d0;"></div>
<div class="a" style="left:1823.1041666666667px;top:906.2px;width:1.9px;height:66.2px;background:#d0d0d0;"></div>
<div class="a" style="left:835.2px;top:887.2px;width:266.8px;height:1.6px;background:#f07c00;"></div>
<div class="a" style="left:1180px;top:887.2px;width:706.7px;height:1.6px;background:#f07c00;"></div>
<div class="a" style="left:1102px;top:895.2px;width:78px;height:1.7px;background:#f030f0;"></div>
<div class="a" style="left:835.2px;top:898.8px;width:1051.5px;height:1.8px;background:#f95c58;"></div>
<div class="a" style="left:383.2px;top:900.5px;width:1503.5px;height:2.4px;background:#1479f2;"></div>
<div class="a" style="left:383.2px;top:914px;width:452.39px;height:56.700000000000045px;background:#76c3ef;"></div>
<div class="a" style="left:835.29px;top:949.2px;width:156.91px;height:21.5px;background:#fb5c57;"></div>
<div class="a" style="left:991.91px;top:914px;width:16.48px;height:56.700000000000045px;background:#76c3ef;"></div>
<div class="a" style="left:1008.09px;top:949.2px;width:93.75px;height:21.5px;background:#fb5c57;"></div>
<div class="a" style="left:1101.54px;top:914px;width:78.61px;height:56.700000000000045px;background:#76c3ef;"></div>
<div class="a" style="left:1179.85px;top:949.2px;width:31.62px;height:21.5px;background:#fb5c57;"></div>
<div class="a" style="left:1211.17px;top:914px;width:16.48px;height:56.700000000000045px;background:#76c3ef;"></div>
<div class="a" style="left:1227.35px;top:949.2px;width:93.75px;height:21.5px;background:#fb5c57;"></div>
<div class="a" style="left:1320.8px;top:914px;width:16.48px;height:56.700000000000045px;background:#76c3ef;"></div>
<div class="a" style="left:1336.98px;top:949.2px;width:62.95px;height:21.5px;background:#fb5c57;"></div>
<div class="a" style="left:1399.63px;top:914px;width:15.44px;height:56.700000000000045px;background:#76c3ef;"></div>
<div class="a" style="left:1414.77px;top:949.2px;width:47.28px;height:21.5px;background:#fb5c57;"></div>
<div class="a" style="left:1461.75px;top:914px;width:78.61px;height:56.700000000000045px;background:#76c3ef;"></div>
<div class="a" style="left:1540.06px;top:949.2px;width:15.96px;height:21.5px;background:#fb5c57;"></div>
<div class="a" style="left:1555.72px;top:914px;width:16.48px;height:56.700000000000045px;background:#76c3ef;"></div>
<div class="a" style="left:1571.9px;top:949.2px;width:15.44px;height:21.5px;background:#fb5c57;"></div>
<div class="a" style="left:383.2px;top:957.2px;width:384.40000000000003px;height:13.5px;background:#d38dfd;"></div>
<div class="a" style="left:1102.1px;top:957.2px;width:77.9px;height:13.5px;background:#d38dfd;"></div>
<div class="a" style="left:1587px;top:941px;width:299.7px;height:29.7px;background:repeating-linear-gradient(135deg,#fff200 0,#fff200 10.6px,#fbf6a6 10.6px,#fbf6a6 11.8px)"></div>
<div class="a" style="left:444.8958333333333px;top:970.7px;width:1.9px;height:2px;background:#d0d0d0;"></div>
<div class="a" style="left:507.5416666666667px;top:970.7px;width:1.9px;height:2px;background:#d0d0d0;"></div>
<div class="a" style="left:570.1875px;top:970.7px;width:1.9px;height:2px;background:#d0d0d0;"></div>
<div class="a" style="left:632.8333333333333px;top:970.7px;width:1.9px;height:2px;background:#d0d0d0;"></div>
<div class="a" style="left:695.4791666666666px;top:970.7px;width:1.9px;height:2px;background:#d0d0d0;"></div>
<div class="a" style="left:758.125px;top:970.7px;width:1.9px;height:2px;background:#d0d0d0;"></div>
<div class="a" style="left:820.7708333333333px;top:970.7px;width:1.9px;height:2px;background:#d0d0d0;"></div>
<div class="a" style="left:883.4166666666666px;top:970.7px;width:1.9px;height:2px;background:#d0d0d0;"></div>
<div class="a" style="left:946.0625px;top:970.7px;width:1.9px;height:2px;background:#d0d0d0;"></div>
<div class="a" style="left:1008.7083333333333px;top:970.7px;width:1.9px;height:2px;background:#d0d0d0;"></div>
<div class="a" style="left:1071.3541666666667px;top:970.7px;width:1.9px;height:2px;background:#d0d0d0;"></div>
<div class="a" style="left:1134.0px;top:970.7px;width:1.9px;height:2px;background:#d0d0d0;"></div>
<div class="a" style="left:1196.6458333333333px;top:970.7px;width:1.9px;height:2px;background:#d0d0d0;"></div>
<div class="a" style="left:1259.2916666666667px;top:970.7px;width:1.9px;height:2px;background:#d0d0d0;"></div>
<div class="a" style="left:1321.9375px;top:970.7px;width:1.9px;height:2px;background:#d0d0d0;"></div>
<div class="a" style="left:1384.5833333333333px;top:970.7px;width:1.9px;height:2px;background:#d0d0d0;"></div>
<div class="a" style="left:1447.2291666666667px;top:970.7px;width:1.9px;height:2px;background:#d0d0d0;"></div>
<div class="a" style="left:1509.875px;top:970.7px;width:1.9px;height:2px;background:#d0d0d0;"></div>
<div class="a" style="left:1572.5208333333335px;top:970.7px;width:1.9px;height:2px;background:#d0d0d0;"></div>
<div class="a" style="left:1635.1666666666667px;top:970.7px;width:1.9px;height:2px;background:#d0d0d0;"></div>
<div class="a" style="left:1697.8125px;top:970.7px;width:1.9px;height:2px;background:#d0d0d0;"></div>
<div class="a" style="left:1760.4583333333335px;top:970.7px;width:1.9px;height:2px;background:#d0d0d0;"></div>
<div class="a" style="left:1823.1041666666667px;top:970.7px;width:1.9px;height:2px;background:#d0d0d0;"></div>
<svg class="a" style="left:583px;top:915.3px;" width="16" height="14" viewBox="0 0 16 14"><g fill="none" stroke="#222" stroke-width="1.1" stroke-linejoin="round" stroke-linecap="round"><path d="M1.2 12.4 V8.4 C1.2 7.4 1.8 6.8 2.8 6.8 H13.2 C14.2 6.8 14.8 7.4 14.8 8.4 V12.4 M1.2 10.2 H14.8"/><path d="M2.8 6.8 V3.6 C2.8 2.6 3.4 2 4.4 2 H11.6 C12.6 2 13.2 2.6 13.2 3.6 V6.8"/><path d="M4.6 6.6 V5.6 C4.6 5 5 4.6 5.6 4.6 H6.8 C7.4 4.6 7.8 5 7.8 5.6 V6.6 M8.2 6.6 V5.6 C8.2 5 8.6 4.6 9.2 4.6 H10.4 C11 4.6 11.4 5 11.4 5.6 V6.6"/></g></svg>
<span class="a t" style="left:601.00px;top:915.95px;font-size:14px;line-height:14px;color:#1a1a1a;letter-spacing:-0.169px;-webkit-text-stroke:0.45px #1a1a1a;">12:05</span>
<span class="a t" style="left:388.50px;top:954.65px;font-size:14px;line-height:14px;color:#1a1a1a;letter-spacing:-0.113px;-webkit-text-stroke:0.45px #1a1a1a;">11:00 / 11:00</span>
<svg class="a" style="left:885.901388888889px;top:952px;" width="16" height="16" viewBox="0 0 16 16"><g fill="none" stroke="#222" stroke-width="1.2"><circle cx="8" cy="8" r="6.4"/><path d="M8 8 V14.2 M8 8 L2.4 4.9 M8 8 L13.6 4.9"/></g></svg>
<span class="a t" style="left:903.50px;top:953.45px;font-size:14px;line-height:14px;color:#1a1a1a;letter-spacing:0.351px;-webkit-text-stroke:0.45px #1a1a1a;">02:30</span>
<svg class="a" style="left:992.0004340277777px;top:914.4px;" width="16" height="14" viewBox="0 0 16 14"><g fill="none" stroke="#222" stroke-width="1.1" stroke-linejoin="round" stroke-linecap="round"><path d="M1.2 12.4 V8.4 C1.2 7.4 1.8 6.8 2.8 6.8 H13.2 C14.2 6.8 14.8 7.4 14.8 8.4 V12.4 M1.2 10.2 H14.8"/><path d="M2.8 6.8 V3.6 C2.8 2.6 3.4 2 4.4 2 H11.6 C12.6 2 13.2 2.6 13.2 3.6 V6.8"/><path d="M4.6 6.6 V5.6 C4.6 5 5 4.6 5.6 4.6 H6.8 C7.4 4.6 7.8 5 7.8 5.6 V6.6 M8.2 6.6 V5.6 C8.2 5 8.6 4.6 9.2 4.6 H10.4 C11 4.6 11.4 5 11.4 5.6 V6.6"/></g></svg>
<svg class="a" style="left:1028.1155381944443px;top:952px;" width="16" height="16" viewBox="0 0 16 16"><g fill="none" stroke="#222" stroke-width="1.2"><circle cx="8" cy="8" r="6.4"/><path d="M8 8 V14.2 M8 8 L2.4 4.9 M8 8 L13.6 4.9"/></g></svg>
<span class="a t" style="left:1045.72px;top:953.45px;font-size:14px;line-height:14px;color:#1a1a1a;letter-spacing:-0.049px;-webkit-text-stroke:0.45px #1a1a1a;">01:30</span>
<svg class="a" style="left:1115.4925347222222px;top:915.3px;" width="16" height="14" viewBox="0 0 16 14"><g fill="none" stroke="#222" stroke-width="1.1" stroke-linejoin="round" stroke-linecap="round"><path d="M1.2 12.4 V8.4 C1.2 7.4 1.8 6.8 2.8 6.8 H13.2 C14.2 6.8 14.8 7.4 14.8 8.4 V12.4 M1.2 10.2 H14.8"/><path d="M2.8 6.8 V3.6 C2.8 2.6 3.4 2 4.4 2 H11.6 C12.6 2 13.2 2.6 13.2 3.6 V6.8"/><path d="M4.6 6.6 V5.6 C4.6 5 5 4.6 5.6 4.6 H6.8 C7.4 4.6 7.8 5 7.8 5.6 V6.6 M8.2 6.6 V5.6 C8.2 5 8.6 4.6 9.2 4.6 H10.4 C11 4.6 11.4 5 11.4 5.6 V6.6"/></g></svg>
<span class="a t" style="left:1132.39px;top:915.95px;font-size:14px;line-height:14px;color:#1a1a1a;letter-spacing:-0.409px;-webkit-text-stroke:0.45px #1a1a1a;">01:15</span>
<svg class="a" style="left:1187.5076388888888px;top:952px;" width="16" height="16" viewBox="0 0 16 16"><g fill="none" stroke="#222" stroke-width="1.2"><circle cx="8" cy="8" r="6.4"/><path d="M8 8 V14.2 M8 8 L2.4 4.9 M8 8 L13.6 4.9"/></g></svg>
<svg class="a" style="left:1211.2608506944443px;top:914.4px;" width="16" height="14" viewBox="0 0 16 14"><g fill="none" stroke="#222" stroke-width="1.1" stroke-linejoin="round" stroke-linecap="round"><path d="M1.2 12.4 V8.4 C1.2 7.4 1.8 6.8 2.8 6.8 H13.2 C14.2 6.8 14.8 7.4 14.8 8.4 V12.4 M1.2 10.2 H14.8"/><path d="M2.8 6.8 V3.6 C2.8 2.6 3.4 2 4.4 2 H11.6 C12.6 2 13.2 2.6 13.2 3.6 V6.8"/><path d="M4.6 6.6 V5.6 C4.6 5 5 4.6 5.6 4.6 H6.8 C7.4 4.6 7.8 5 7.8 5.6 V6.6 M8.2 6.6 V5.6 C8.2 5 8.6 4.6 9.2 4.6 H10.4 C11 4.6 11.4 5 11.4 5.6 V6.6"/></g></svg>
<svg class="a" style="left:1247.375954861111px;top:952px;" width="16" height="16" viewBox="0 0 16 16"><g fill="none" stroke="#222" stroke-width="1.2"><circle cx="8" cy="8" r="6.4"/><path d="M8 8 V14.2 M8 8 L2.4 4.9 M8 8 L13.6 4.9"/></g></svg>
<span class="a t" style="left:1264.98px;top:953.45px;font-size:14px;line-height:14px;color:#1a1a1a;letter-spacing:-0.049px;-webkit-text-stroke:0.45px #1a1a1a;">01:30</span>
<svg class="a" style="left:1320.8910590277778px;top:914.4px;" width="16" height="14" viewBox="0 0 16 14"><g fill="none" stroke="#222" stroke-width="1.1" stroke-linejoin="round" stroke-linecap="round"><path d="M1.2 12.4 V8.4 C1.2 7.4 1.8 6.8 2.8 6.8 H13.2 C14.2 6.8 14.8 7.4 14.8 8.4 V12.4 M1.2 10.2 H14.8"/><path d="M2.8 6.8 V3.6 C2.8 2.6 3.4 2 4.4 2 H11.6 C12.6 2 13.2 2.6 13.2 3.6 V6.8"/><path d="M4.6 6.6 V5.6 C4.6 5 5 4.6 5.6 4.6 H6.8 C7.4 4.6 7.8 5 7.8 5.6 V6.6 M8.2 6.6 V5.6 C8.2 5 8.6 4.6 9.2 4.6 H10.4 C11 4.6 11.4 5 11.4 5.6 V6.6"/></g></svg>
<svg class="a" style="left:1342.0057291666667px;top:952px;" width="16" height="16" viewBox="0 0 16 16"><g fill="none" stroke="#222" stroke-width="1.2"><circle cx="8" cy="8" r="6.4"/><path d="M8 8 V14.2 M8 8 L2.4 4.9 M8 8 L13.6 4.9"/></g></svg>
<span class="a t" style="left:1359.61px;top:953.45px;font-size:14px;line-height:14px;color:#1a1a1a;letter-spacing:-0.209px;-webkit-text-stroke:0.45px #1a1a1a;">01:00</span>
<svg class="a" style="left:1399.1983506944443px;top:914.4px;" width="16" height="14" viewBox="0 0 16 14"><g fill="none" stroke="#222" stroke-width="1.1" stroke-linejoin="round" stroke-linecap="round"><path d="M1.2 12.4 V8.4 C1.2 7.4 1.8 6.8 2.8 6.8 H13.2 C14.2 6.8 14.8 7.4 14.8 8.4 V12.4 M1.2 10.2 H14.8"/><path d="M2.8 6.8 V3.6 C2.8 2.6 3.4 2 4.4 2 H11.6 C12.6 2 13.2 2.6 13.2 3.6 V6.8"/><path d="M4.6 6.6 V5.6 C4.6 5 5 4.6 5.6 4.6 H6.8 C7.4 4.6 7.8 5 7.8 5.6 V6.6 M8.2 6.6 V5.6 C8.2 5 8.6 4.6 9.2 4.6 H10.4 C11 4.6 11.4 5 11.4 5.6 V6.6"/></g></svg>
<svg class="a" style="left:1430.2602430555555px;top:952px;" width="16" height="16" viewBox="0 0 16 16"><g fill="none" stroke="#222" stroke-width="1.2"><circle cx="8" cy="8" r="6.4"/><path d="M8 8 V14.2 M8 8 L2.4 4.9 M8 8 L13.6 4.9"/></g></svg>
<svg class="a" style="left:1475.7060763888887px;top:915.3px;" width="16" height="14" viewBox="0 0 16 14"><g fill="none" stroke="#222" stroke-width="1.1" stroke-linejoin="round" stroke-linecap="round"><path d="M1.2 12.4 V8.4 C1.2 7.4 1.8 6.8 2.8 6.8 H13.2 C14.2 6.8 14.8 7.4 14.8 8.4 V12.4 M1.2 10.2 H14.8"/><path d="M2.8 6.8 V3.6 C2.8 2.6 3.4 2 4.4 2 H11.6 C12.6 2 13.2 2.6 13.2 3.6 V6.8"/><path d="M4.6 6.6 V5.6 C4.6 5 5 4.6 5.6 4.6 H6.8 C7.4 4.6 7.8 5 7.8 5.6 V6.6 M8.2 6.6 V5.6 C8.2 5 8.6 4.6 9.2 4.6 H10.4 C11 4.6 11.4 5 11.4 5.6 V6.6"/></g></svg>
<span class="a t" style="left:1492.61px;top:915.95px;font-size:14px;line-height:14px;color:#1a1a1a;letter-spacing:-0.409px;-webkit-text-stroke:0.45px #1a1a1a;">01:15</span>
<svg class="a" style="left:1539.8904513888888px;top:952px;" width="16" height="16" viewBox="0 0 16 16"><g fill="none" stroke="#222" stroke-width="1.2"><circle cx="8" cy="8" r="6.4"/><path d="M8 8 V14.2 M8 8 L2.4 4.9 M8 8 L13.6 4.9"/></g></svg>
<svg class="a" style="left:1555.8129340277778px;top:914.4px;" width="16" height="14" viewBox="0 0 16 14"><g fill="none" stroke="#222" stroke-width="1.1" stroke-linejoin="round" stroke-linecap="round"><path d="M1.2 12.4 V8.4 C1.2 7.4 1.8 6.8 2.8 6.8 H13.2 C14.2 6.8 14.8 7.4 14.8 8.4 V12.4 M1.2 10.2 H14.8"/><path d="M2.8 6.8 V3.6 C2.8 2.6 3.4 2 4.4 2 H11.6 C12.6 2 13.2 2.6 13.2 3.6 V6.8"/><path d="M4.6 6.6 V5.6 C4.6 5 5 4.6 5.6 4.6 H6.8 C7.4 4.6 7.8 5 7.8 5.6 V6.6 M8.2 6.6 V5.6 C8.2 5 8.6 4.6 9.2 4.6 H10.4 C11 4.6 11.4 5 11.4 5.6 V6.6"/></g></svg>
<svg class="a" style="left:1571.4743923611113px;top:952px;" width="16" height="16" viewBox="0 0 16 16"><g fill="none" stroke="#222" stroke-width="1.2"><circle cx="8" cy="8" r="6.4"/><path d="M8 8 V14.2 M8 8 L2.4 4.9 M8 8 L13.6 4.9"/></g></svg>
<svg class="a" style="left:1708.5px;top:947.5px;" width="16" height="16" viewBox="0 0 16 16"><g fill="none" stroke="#222" stroke-width="1.2"><rect x="1.6" y="1.6" width="12.4" height="12.4" rx="2.6"/><path d="M2.6 13 L13 2.6"/></g></svg>
<span class="a t" style="left:1727.50px;top:948.95px;font-size:14px;line-height:14px;color:#1a1a1a;letter-spacing:0.191px;-webkit-text-stroke:0.45px #1a1a1a;">59:53</span>
<div class="a" style="left:1336.1px;top:935px;width:1.6px;height:35.7px;background:#1a1a1a;"></div>
<div class="a" style="left:1333.1px;top:915.9px;width:8.8px;height:20px;box-sizing:border-box;border:1.2px solid #111;background:repeating-linear-gradient(45deg,#fff 0,#fff 2.2px,#111 2.2px,#111 4px)"></div>
<span class="a t" style="left:1344.60px;top:922.03px;font-size:8px;line-height:8px;color:#222;">E</span>
<div class="a" style="left:834.5px;top:907.4px;width:1.7px;height:88.4px;background:#5aa04a;"></div>
<span class="a t" style="left:836.40px;top:987.75px;font-size:14px;line-height:14px;color:#146f14;letter-spacing:-0.409px;-webkit-text-stroke:0.3px #146f14;">07:13</span>
<span class="a t" style="left:443.25px;top:976.84px;font-size:12px;line-height:12px;color:#333;">1</span>
<span class="a t" style="left:505.89px;top:976.84px;font-size:12px;line-height:12px;color:#333;">2</span>
<span class="a t" style="left:568.54px;top:976.84px;font-size:12px;line-height:12px;color:#333;">3</span>
<span class="a t" style="left:631.18px;top:976.84px;font-size:12px;line-height:12px;color:#333;">4</span>
<span class="a t" style="left:693.83px;top:976.84px;font-size:12px;line-height:12px;color:#333;">5</span>
<span class="a t" style="left:756.48px;top:976.84px;font-size:12px;line-height:12px;color:#333;">6</span>
<span class="a t" style="left:819.12px;top:976.84px;font-size:12px;line-height:12px;color:#333;">7</span>
<span class="a t" style="left:881.77px;top:976.84px;font-size:12px;line-height:12px;color:#333;">8</span>
<span class="a t" style="left:944.41px;top:976.84px;font-size:12px;line-height:12px;color:#333;">9</span>
<span class="a t" style="left:1007.66px;top:976.84px;font-size:12px;line-height:12px;color:#333;letter-spacing:-0.480px;">10</span>
<span class="a t" style="left:1070.30px;top:976.84px;font-size:12px;line-height:12px;color:#333;letter-spacing:-0.034px;">11</span>
<span class="a t" style="left:1132.95px;top:976.84px;font-size:12px;line-height:12px;color:#333;letter-spacing:-0.480px;">12</span>
<span class="a t" style="left:1195.60px;top:976.84px;font-size:12px;line-height:12px;color:#333;letter-spacing:-0.480px;">13</span>
<span class="a t" style="left:1258.24px;top:976.84px;font-size:12px;line-height:12px;color:#333;letter-spacing:-0.480px;">14</span>
<span class="a t" style="left:1320.89px;top:976.84px;font-size:12px;line-height:12px;color:#333;letter-spacing:-0.480px;">15</span>
<span class="a t" style="left:1383.53px;top:976.84px;font-size:12px;line-height:12px;color:#333;letter-spacing:-0.480px;">16</span>
<span class="a t" style="left:1446.18px;top:976.84px;font-size:12px;line-height:12px;color:#333;letter-spacing:-0.480px;">17</span>
<span class="a t" style="left:1508.83px;top:976.84px;font-size:12px;line-height:12px;color:#333;letter-spacing:-0.480px;">18</span>
<span class="a t" style="left:1571.47px;top:976.84px;font-size:12px;line-height:12px;color:#333;letter-spacing:-0.480px;">19</span>
<span class="a t" style="left:1634.12px;top:976.84px;font-size:12px;line-height:12px;color:#333;letter-spacing:-0.480px;">20</span>
<span class="a t" style="left:1696.76px;top:976.84px;font-size:12px;line-height:12px;color:#333;letter-spacing:-0.480px;">21</span>
<span class="a t" style="left:1759.41px;top:976.84px;font-size:12px;line-height:12px;color:#333;letter-spacing:-0.480px;">22</span>
<span class="a t" style="left:1822.05px;top:976.84px;font-size:12px;line-height:12px;color:#333;letter-spacing:-0.480px;">23</span>
<div class="a" style="left:365px;top:382px;width:1556px;height:59.6px;box-sizing:border-box;border:5px solid #e41b1b;border-right-width:9.8px"></div>
<div class="a" style="left:1013.1px;top:441px;width:5px;height:368px;background:#e41b1b;"></div>
<svg class="a" style="left:1000px;top:804px;" width="32" height="30" viewBox="0 0 32 30"><path d="M3 2.2 L28 2.2 L15.5 27.1 Z" fill="#e41b1b"/></svg>
<div class="a" style="left:360px;top:832.2px;width:1552.1px;height:172.1px;box-sizing:border-box;border:5.1px solid #e41b1b"></div>
<svg class="a" style="left:1902px;top:1014px;" width="14" height="14" viewBox="0 0 14 14"><g fill="#555"><rect x="10.6" y="3" width="1.6" height="1.6"/><rect x="7.2" y="6.4" width="1.6" height="1.6"/><rect x="10.6" y="6.4" width="1.6" height="1.6"/><rect x="3.8" y="9.8" width="1.6" height="1.6"/><rect x="7.2" y="9.8" width="1.6" height="1.6"/><rect x="10.6" y="9.8" width="1.6" height="1.6"/></g></svg>
</div>
</body></html>
